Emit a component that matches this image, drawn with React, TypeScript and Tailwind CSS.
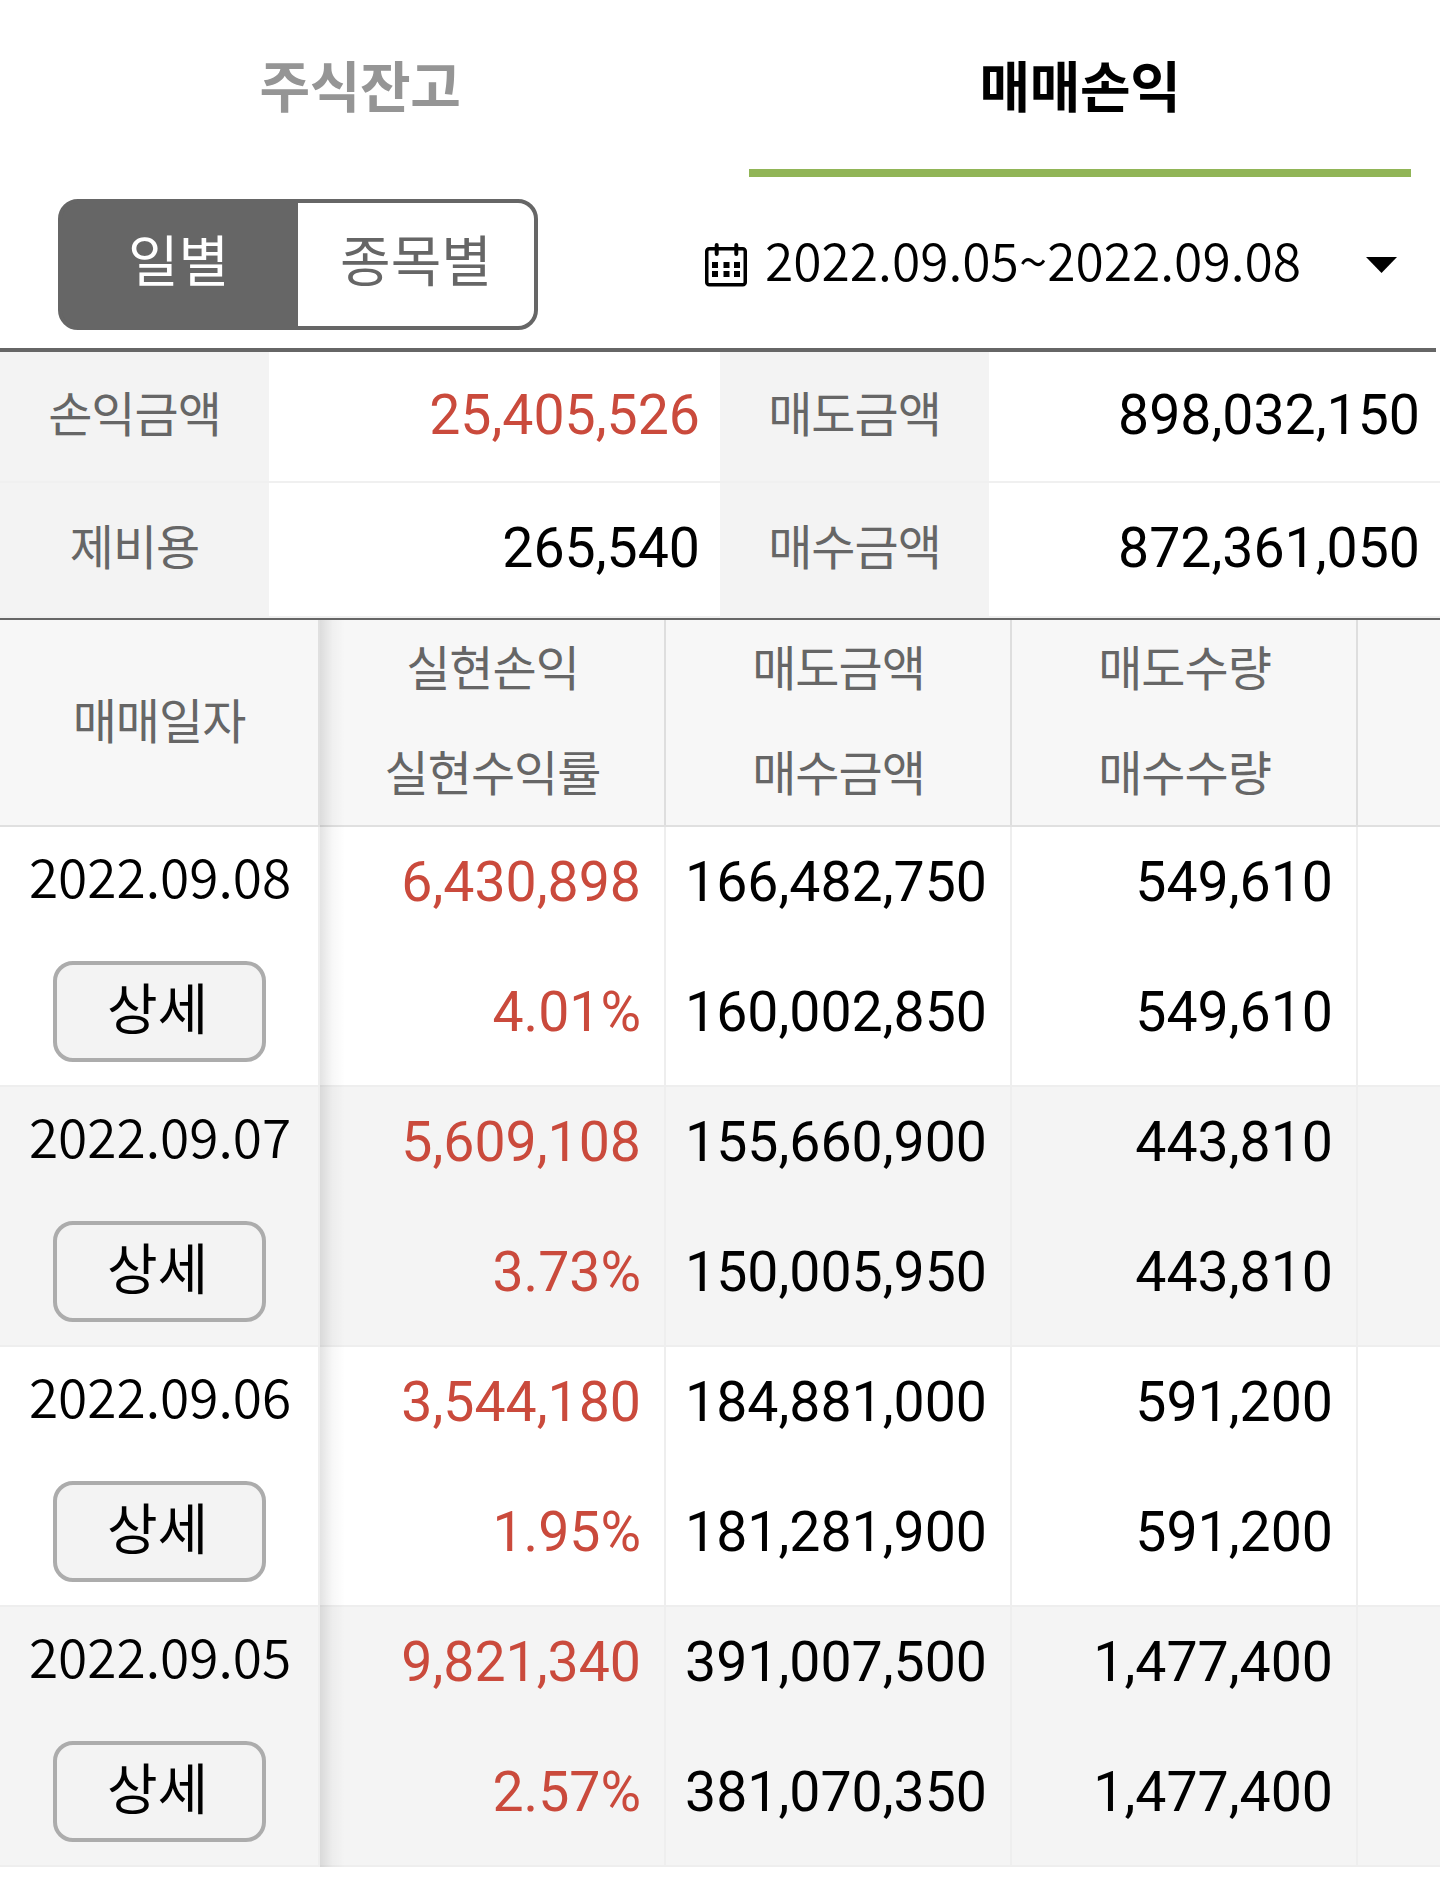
import { useState } from "react";
import clsx from "clsx";

interface DailyTrade {
  date: string;
  profit: string;
  rate: string;
  sellAmount: string;
  buyAmount: string;
  sellQty: string;
  buyQty: string;
}

const trades: DailyTrade[] = [
  { date: "2022.09.08", profit: "6,430,898", rate: "4.01%", sellAmount: "166,482,750", buyAmount: "160,002,850", sellQty: "549,610", buyQty: "549,610" },
  { date: "2022.09.07", profit: "5,609,108", rate: "3.73%", sellAmount: "155,660,900", buyAmount: "150,005,950", sellQty: "443,810", buyQty: "443,810" },
  { date: "2022.09.06", profit: "3,544,180", rate: "1.95%", sellAmount: "184,881,000", buyAmount: "181,281,900", sellQty: "591,200", buyQty: "591,200" },
  { date: "2022.09.05", profit: "9,821,340", rate: "2.57%", sellAmount: "391,007,500", buyAmount: "381,070,350", sellQty: "1,477,400", buyQty: "1,477,400" },
];

const columns = [
  ["실현손익", "실현수익률"],
  ["매도금액", "매수금액"],
  ["매도수량", "매수수량"],
];

function CalendarIcon() {
  return (
    <svg width="42" height="44" viewBox="0 0 42 44" fill="none">
      <rect x="1.75" y="5.75" width="38.5" height="36" rx="2.5" stroke="#000" strokeWidth="3.5" />
      <path d="M11.7 2v9M31.3 2v9" stroke="#000" strokeWidth="4" strokeLinecap="round" />
      <path d="M7 19h6v6H7zM18.500 19h6v6h-6zM29 19h6v6h-6zM7 28h6v6H7zM18.500 28h6v6h-6zM29 28h6v6h-6z" fill="#000" />
    </svg>
  );
}

function SummaryCell({ label, value, red }: { label: string; value: string; red?: boolean }) {
  return (
    <div className="flex w-[720px]">
      <div className="flex w-[269px] items-center justify-center bg-[#f3f3f3] pb-[12px] text-[48px] tracking-[-1px] text-[#666]">
        {label}
      </div>
      <div
        className={clsx(
          "flex flex-1 items-center justify-end pr-[20px] pb-[1px] font-['Roboto'] text-[55.4px]",
          red && "text-[#ca4a3c]"
        )}
      >
        {value}
      </div>
    </div>
  );
}

function ValueCell({ top, bottom, red }: { top: string; bottom: string; red?: boolean }) {
  return (
    <div
      className={clsx(
        "w-[346px] shrink-0 border-r-2 border-[#eeeeee] pr-[23px] text-right font-['Roboto'] text-[55.4px]",
        red && "text-[#ca4a3c]"
      )}
    >
      <div className="h-[130px] leading-[112px]">{top}</div>
      <div className="h-[128px] leading-[112px]">{bottom}</div>
    </div>
  );
}

export default function App() {
  const [tab, setTab] = useState("profit");
  const [mode, setMode] = useState("daily");

  return (
    <div className="h-[1878px] w-[1440px] overflow-hidden bg-white font-['Noto_Sans_CJK_KR',sans-serif] leading-none text-black">
      {/* Tabs */}
      <div className="flex h-[177px]">
        {[
          ["balance", "주식잔고"],
          ["profit", "매매손익"],
        ].map(([key, label]) => (
          <button key={key} onClick={() => setTab(key)} className="flex w-[720px] flex-col px-[29px]">
            <span
              className={clsx(
                "h-[169px] w-full text-center text-[55px] font-bold tracking-[-0.4px] leading-[166px]",
                tab === key ? "text-black" : "text-[#959595]"
              )}
            >
              {label}
            </span>
            {tab === key && <span className="h-[8px] w-full bg-[#91b557]" />}
          </button>
        ))}
      </div>

      {/* Filter bar */}
      <div className="flex h-[171px] pt-[22px] pl-[58px]">
        <div className="flex h-[131px] w-[480px] rounded-[20px] border-4 border-[#666] bg-[#666]">
          {[
            ["daily", "일별"],
            ["stock", "종목별"],
          ].map(([key, label]) => (
            <button
              key={key}
              onClick={() => setMode(key)}
              className={clsx(
                "w-[236px] pb-[15px] text-[55px] first:rounded-l-[16px] first:pr-[3px] last:rounded-r-[16px]",
                mode === key ? "bg-[#666] text-white" : "bg-white text-[#666]"
              )}
            >
              {label}
            </button>
          ))}
        </div>
        <div className="flex h-[131px] flex-1 items-center pl-[167px]">
          <CalendarIcon />
          <span className="ml-[18px] w-[537px] pb-[12px] text-[51.5px] font-[350] whitespace-nowrap">
            2022.09.05~2022.09.08
          </span>
          <svg className="ml-[64px]" width="31" height="16" viewBox="0 0 31 16">
            <path d="M0 0h31L15.500 16z" />
          </svg>
        </div>
      </div>

      {/* Summary */}
      <div className="h-[4px] w-[1436px] bg-[#666]" />
      <div className="flex h-[131px] border-b-2 border-[#f0f0f0]">
        <SummaryCell label="손익금액" value="25,405,526" red />
        <SummaryCell label="매도금액" value="898,032,150" />
      </div>
      <div className="flex h-[135px] border-b-2 border-[#f0f0f0]">
        <SummaryCell label="제비용" value="265,540" />
        <SummaryCell label="매수금액" value="872,361,050" />
      </div>

      {/* Daily table */}
      <div className="relative border-t-2 border-[#666]">
        <div className="flex h-[207px] border-b-2 border-[#e0e0e0] bg-[#f7f7f7] text-[48px] tracking-[-1px] text-[#666]">
          <div className="flex w-[320px] shrink-0 items-center justify-center border-r-2 border-[#e0e0e0] pb-[10px]">
            매매일자
          </div>
          {columns.map(([top, bottom]) => (
            <div key={top} className="w-[346px] shrink-0 border-r-2 border-[#dedede] pl-[1px] text-center">
              <div className="h-[105px] leading-[90px]">{top}</div>
              <div className="leading-[90px]">{bottom}</div>
            </div>
          ))}
        </div>
        {trades.map((t, i) => (
          <div
            key={t.date}
            className={clsx("flex h-[260px] border-b-2 border-[#eeeeee]", i % 2 === 1 ? "bg-[#f4f4f4]" : "bg-white")}
          >
            <div className="flex w-[320px] shrink-0 flex-col items-center border-r-2 border-[#eeeeee]">
              <span className="h-[134px] pl-[2px] text-[53.2px] font-[350] leading-[96px]">{t.date}</span>
              <button className="h-[101px] w-[213px] rounded-[20px] border-4 border-[#acacac] bg-[#f3f3f3] pr-[3px] pb-[13px] text-[55px]">
                상세
              </button>
            </div>
            <ValueCell top={t.profit} bottom={t.rate} red />
            <ValueCell top={t.sellAmount} bottom={t.buyAmount} />
            <ValueCell top={t.sellQty} bottom={t.buyQty} />
          </div>
        ))}
        <div className="absolute top-0 left-[320px] h-full w-[25px] bg-linear-to-r from-black/11 via-black/3 to-transparent" />
      </div>
    </div>
  );
}
